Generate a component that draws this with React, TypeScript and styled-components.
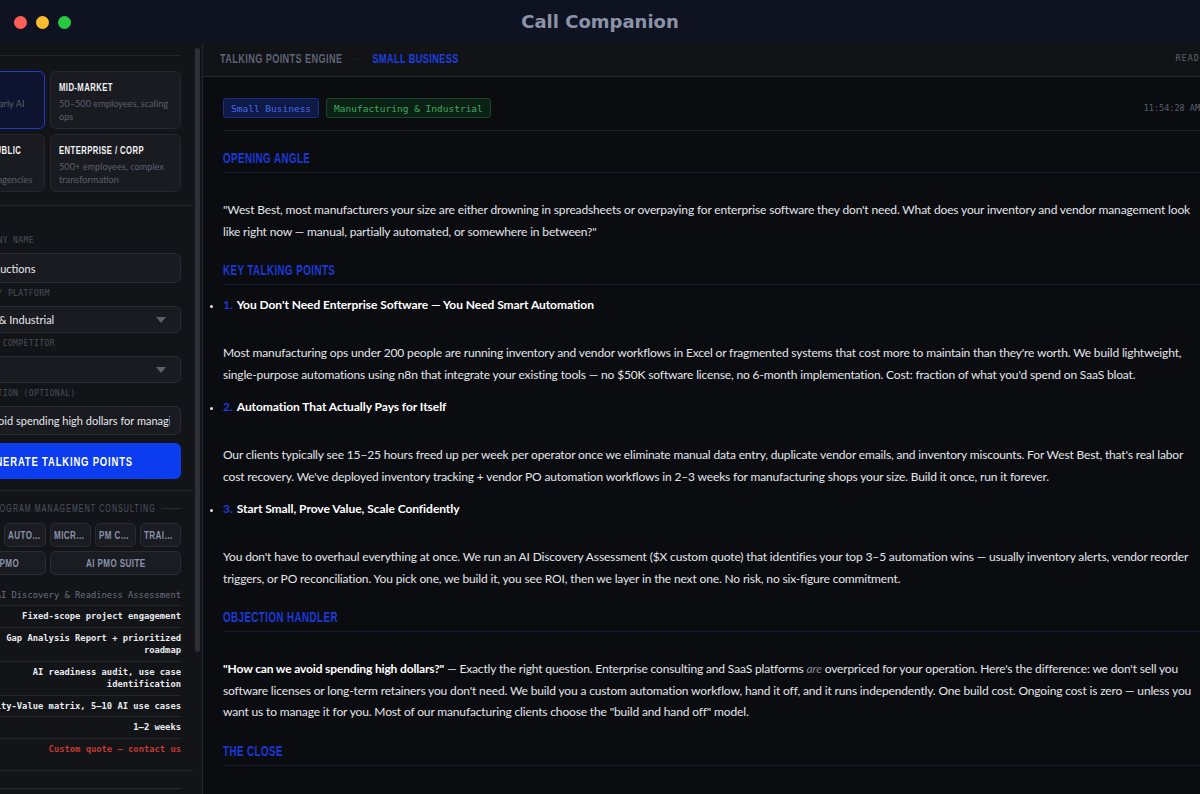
import React from "react";
import styled, { createGlobalStyle, css } from "styled-components";

const mono = `"DejaVu Sans Mono", "Liberation Mono", monospace`;
const sans = `Lato, "Noto Sans", sans-serif`;

/* narrow display caps: Liberation Sans Bold squeezed horizontally */
const SQUEEZE = 0.7;
const display = css`
  font-family: "Liberation Sans", Arial, sans-serif;
  font-weight: 700;
  white-space: nowrap;
`;
const squeeze = css`
  display: block;
  flex-shrink: 0;
  width: calc(100% / ${SQUEEZE});
  transform: scaleX(${SQUEEZE});
  transform-origin: left center;
`;

const GlobalStyle = createGlobalStyle`
  html, body {
    margin: 0;
    padding: 0;
    background: #0b0c10;
    overflow: hidden;
  }
  * {
    box-sizing: border-box;
  }
`;

const Window = styled.div`
  width: 1200px;
  height: 794px;
  display: flex;
  flex-direction: column;
  overflow: hidden;
  background: #0b0c10;
  font-family: ${sans};
`;

const TitleBar = styled.div`
  height: 43px;
  flex-shrink: 0;
  display: grid;
  grid-template-columns: 1fr auto 1fr;
  align-items: center;
  padding: 0 14px;
  background: #0f1321;
`;

const Lights = styled.div`
  display: flex;
  gap: 9px;
  margin-top: 1px;
`;

const Light = styled.span<{ $color: string }>`
  width: 13px;
  height: 13px;
  border-radius: 50%;
  background: ${(p) => p.$color};
`;

const AppTitle = styled.div`
  font-family: "DejaVu Sans", sans-serif;
  font-weight: 700;
  font-size: 18px;
  color: #8b93a9;
`;

const Body = styled.div`
  flex: 1;
  min-height: 0;
  display: flex;
  overflow: hidden;
`;

/* sidebar is wider than the part of the window in view */
const SideClip = styled.div`
  width: 203px;
  flex-shrink: 0;
  display: flex;
  justify-content: flex-end;
  overflow: hidden;
  background: #131418;
  border-right: 1px solid #23252b;
`;

const Sidebar = styled.aside`
  width: 295px;
  flex-shrink: 0;
  padding: 0 2px;
`;

const ScrollTrack = styled.div`
  width: 7px;
  flex-shrink: 0;
  padding-top: 5px;
`;

const ScrollThumb = styled.div`
  width: 5px;
  height: 604px;
  border-radius: 3px;
  background: #2d3037;
`;

const SideSection = styled.section<{ $pad: string; $last?: boolean }>`
  padding: ${(p) => p.$pad};
  border-bottom: ${(p) => (p.$last ? "none" : "1px solid #24262c")};
`;

const TopRule = styled.div`
  height: 13px;
  border-bottom: 1px solid #22242a;
`;

const CardGrid = styled.div`
  display: grid;
  grid-template-columns: minmax(0, 1fr) minmax(0, 1fr);
  gap: 5px;
  margin-top: 15px;
`;

const SegmentCard = styled.div<{ $active?: boolean }>`
  height: 58px;
  padding: 8px;
  overflow: hidden;
  border-radius: 6px;
  background: ${(p) => (p.$active ? "#0e1330" : "#1a1b20")};
  border: 1px solid ${(p) => (p.$active ? "#1e3ccf" : "#26282e")};
`;

const CardTitle = styled.div`
  ${display};
  ${squeeze};
  font-size: 11px;
  line-height: 14px;
  letter-spacing: 0.6px;
  color: #f2f3f6;
`;

const CardSub = styled.div`
  margin-top: 3px;
  font-size: 9.2px;
  line-height: 13px;
  color: #5a5f6b;
`;

const FieldLabel = styled.div`
  font-family: ${mono};
  font-size: 8px;
  line-height: 10px;
  letter-spacing: 0.4px;
  color: #4a4f5a;
  margin-bottom: 7px;
  white-space: nowrap;
`;

const Field = styled.div<{ $h: number }>`
  height: ${(p) => p.$h}px;
  margin-bottom: 6px;
  display: flex;
  align-items: center;
  gap: 8px;
  padding: 0 10px;
  border-radius: 6px;
  background: #1a1b20;
  border: 1px solid #2a2c33;
  font-size: 11px;
  color: #e6e8ec;
  white-space: nowrap;
`;

const FieldText = styled.span`
  flex: 1;
  overflow: hidden;
`;

const Caret = styled.span`
  width: 0;
  height: 0;
  border-left: 5px solid transparent;
  border-right: 5px solid transparent;
  border-top: 6px solid #5c616d;
  margin-right: 4px;
`;

const GenerateButton = styled.button`
  width: 100%;
  height: 36px;
  margin-top: 2px;
  padding: 0 0 0 18px;
  border: none;
  border-radius: 6px;
  background: #0b3cf0;
  color: #ffffff;
  overflow: hidden;
  span {
    ${display};
    ${squeeze};
    font-size: 13.5px;
    letter-spacing: 1.2px;
    text-align: center;
  }
`;

const GroupLabel = styled.div`
  ${display};
  ${squeeze};
  display: flex;
  align-items: center;
  gap: 8px;
  height: 10px;
  font-weight: 400;
  font-size: 10px;
  letter-spacing: 1.6px;
  color: #4e5464;
  &::after {
    content: "";
    flex: 1;
    height: 1px;
    background: #2a2c33;
  }
`;

const ChipRow = styled.div<{ $cols: number; $top: number }>`
  display: grid;
  grid-template-columns: repeat(${(p) => p.$cols}, minmax(0, 1fr));
  gap: 4px;
  margin-top: ${(p) => p.$top}px;
`;

const Chip = styled.div<{ $active?: boolean }>`
  height: 24px;
  padding: 0 3px;
  display: flex;
  align-items: center;
  border-radius: 5px;
  background: ${(p) => (p.$active ? "#0e1330" : "#1b1c21")};
  border: 1px solid ${(p) => (p.$active ? "#1e3ccf" : "#2a2c33")};
  overflow: hidden;
  span {
    ${display};
    ${squeeze};
    font-size: 11.5px;
    letter-spacing: 0.6px;
    text-align: center;
    color: #8a93ab;
    overflow: hidden;
    text-overflow: ellipsis;
  }
`;

const ServiceName = styled.div`
  margin-top: 14px;
  font-family: ${mono};
  font-size: 8.8px;
  line-height: 12px;
  color: #6b7080;
  text-align: right;
  white-space: nowrap;
`;

const SpecTable = styled.div`
  margin-top: 4px;
`;

const SpecRow = styled.div`
  display: flex;
  justify-content: space-between;
  gap: 16px;
  padding: 4px 0;
  border-top: 1px solid #24262c;
  font-family: ${mono};
  font-size: 8.8px;
  line-height: 12.5px;
`;

const SpecKey = styled.span`
  flex-shrink: 0;
  color: #5a5f6b;
`;

const SpecValue = styled.span<{ $accent?: boolean }>`
  text-align: right;
  font-weight: 700;
  color: ${(p) => (p.$accent ? "#c23a2e" : "#e8eaee")};
`;

const Main = styled.main`
  flex: 0 0 1017px;
  display: flex;
  flex-direction: column;
  background: #0b0c10;
`;

const MainHeader = styled.header`
  height: 34px;
  flex-shrink: 0;
  display: flex;
  align-items: center;
  padding: 0 14px 3px 17px;
  background: #121317;
  border-bottom: 1px solid #25272c;
`;

const HeaderTrail = styled.div`
  flex: 1;
  min-width: 0;
`;

const Crumbs = styled.div`
  ${squeeze};
  display: flex;
  align-items: center;
  gap: 20px;
`;

const HeaderCrumb = styled.span<{ $accent?: boolean }>`
  ${display};
  font-size: 13px;
  letter-spacing: 0.6px;
  color: ${(p) => (p.$accent ? "#1d40e0" : "#5e6475")};
`;

const CrumbDot = styled.span`
  color: #2c2f38;
  font-size: 12px;
`;

const Status = styled.span`
  font-family: ${mono};
  font-size: 8.5px;
  letter-spacing: 1px;
  color: #5c6272;
`;

const Content = styled.div`
  flex: 1;
  padding: 21px 20px 0;
  overflow: hidden;
`;

const TagRow = styled.div`
  display: flex;
  align-items: center;
  gap: 7px;
  padding-bottom: 12px;
  border-bottom: 1px solid #1f2126;
`;

const Tag = styled.span<{ $tone: "blue" | "green" }>`
  height: 20px;
  display: inline-flex;
  align-items: center;
  padding: 0 7px;
  border-radius: 3px;
  font-family: ${mono};
  font-size: 9.5px;
  background: ${(p) => (p.$tone === "blue" ? "#0e1a46" : "#0c2116")};
  border: 1px solid ${(p) => (p.$tone === "blue" ? "#1a2e82" : "#1c462a")};
  color: ${(p) => (p.$tone === "blue" ? "#4a68e8" : "#3daa5a")};
`;

const Timestamp = styled.span`
  margin-left: auto;
  font-family: ${mono};
  font-size: 8.5px;
  color: #5a6070;
`;

const SectionTitle = styled.h2`
  margin: 19px 0 0;
  padding-bottom: 5px;
  border-bottom: 1px solid #141a2c;
  font-size: 14px;
  line-height: 18px;
  ${TagRow} + & {
    margin-top: 18px;
  }
  span {
    ${display};
    ${squeeze};
    letter-spacing: 0.6px;
    color: #1a3ad8;
  }
`;

const Para = styled.p`
  margin: 26px 0 0;
  font-size: 12px;
  letter-spacing: -0.15px;
  line-height: 21.5px;
  color: #e3e5ea;
  strong {
    color: #ffffff;
  }
  em {
    color: #858a96;
  }
`;

const PointList = styled.ul`
  margin: 0 0 4px;
  padding: 0;
  list-style: disc outside;
  color: #e3e5ea;
`;

const Point = styled.li`
  margin-top: 11px;
  &:first-child {
    margin-top: 9px;
  }
  &::marker {
    font-size: 10px;
  }
`;

const PointTitle = styled.div`
  font-size: 12px;
  letter-spacing: -0.05px;
  line-height: 22px;
  font-weight: 700;
  color: #ffffff;
`;

const PointNum = styled.span`
  color: #1a3ad8;
  margin-right: 4px;
`;

const segments = [
  { title: "SMALL BUSINESS", sub: "1–50 employees, early AI", active: true },
  { title: "MID-MARKET", sub: "50–500 employees, scaling ops" },
  { title: "GOVERNMENT / PUBLIC", sub: "State, county, city municipalities and agencies" },
  { title: "ENTERPRISE / CORP", sub: "500+ employees, complex transformation" },
];

const services = ["AI DISCOVERY", "AGENT BUILD", "AUTOMATION", "MICROSOFT 365", "PM COACHING", "TRAINING"];
const suites = ["FRACTIONAL PMO", "AI PMO SUITE"];

const specs: [string, string][] = [
  ["Format", "Fixed-scope project engagement"],
  ["Deliverable", "Gap Analysis Report + prioritized roadmap"],
  ["Includes", "AI readiness audit, use case identification"],
  ["Output", "Priority-Value matrix, 5–10 AI use cases"],
  ["Timeline", "1–2 weeks"],
  ["Investment", "Custom quote — contact us"],
];

const points = [
  {
    title: "You Don't Need Enterprise Software — You Need Smart Automation",
    body: "Most manufacturing ops under 200 people are running inventory and vendor workflows in Excel or fragmented systems that cost more to maintain than they're worth. We build lightweight, single-purpose automations using n8n that integrate your existing tools — no $50K software license, no 6-month implementation. Cost: fraction of what you'd spend on SaaS bloat.",
  },
  {
    title: "Automation That Actually Pays for Itself",
    body: "Our clients typically see 15–25 hours freed up per week per operator once we eliminate manual data entry, duplicate vendor emails, and inventory miscounts. For West Best, that's real labor cost recovery. We've deployed inventory tracking + vendor PO automation workflows in 2–3 weeks for manufacturing shops your size. Build it once, run it forever.",
  },
  {
    title: "Start Small, Prove Value, Scale Confidently",
    body: "You don't have to overhaul everything at once. We run an AI Discovery Assessment ($X custom quote) that identifies your top 3–5 automation wins — usually inventory alerts, vendor reorder triggers, or PO reconciliation. You pick one, we build it, you see ROI, then we layer in the next one. No risk, no six-figure commitment.",
  },
];

function App() {
  return (
    <>
      <GlobalStyle />
      <Window>
        <TitleBar>
          <Lights>
            <Light $color="#ff5f57" />
            <Light $color="#febc2e" />
            <Light $color="#28c840" />
          </Lights>
          <AppTitle>Call Companion</AppTitle>
          <span />
        </TitleBar>

        <Body>
          <SideClip>
            <Sidebar>
              <SideSection $pad="0 12px 13px">
                <TopRule />
                <CardGrid>
                  {segments.map((s) => (
                    <SegmentCard key={s.title} $active={s.active}>
                      <CardTitle>{s.title}</CardTitle>
                      <CardSub>{s.sub}</CardSub>
                    </SegmentCard>
                  ))}
                </CardGrid>
              </SideSection>

              <SideSection $pad="30px 12px 11px">
                <FieldLabel>PROSPECT / COMPANY NAME</FieldLabel>
                <Field $h={30}>
                  <FieldText>West Best Productions</FieldText>
                </Field>
                <FieldLabel>TARGET INDUSTRY / PLATFORM</FieldLabel>
                <Field $h={27}>
                  <FieldText>Manufacturing &amp; Industrial</FieldText>
                  <Caret />
                </Field>
                <FieldLabel>CURRENT VENDOR / COMPETITOR</FieldLabel>
                <Field $h={27}>
                  <FieldText />
                  <Caret />
                </Field>
                <FieldLabel>OBJECTION / QUESTION (OPTIONAL)</FieldLabel>
                <Field $h={29}>
                  <FieldText>How can we avoid spending high dollars for managing it</FieldText>
                </Field>
                <GenerateButton>
                  <span>GENERATE TALKING POINTS</span>
                </GenerateButton>
              </SideSection>

              <SideSection $pad="12px 12px 11px">
                <GroupLabel>AI SOLUTIONS + PROGRAM MANAGEMENT CONSULTING</GroupLabel>
                <ChipRow $cols={6} $top={10}>
                  {services.map((s, i) => (
                    <Chip key={s} $active={i === 0}>
                      <span>{s}</span>
                    </Chip>
                  ))}
                </ChipRow>
                <ChipRow $cols={2} $top={4}>
                  {suites.map((s) => (
                    <Chip key={s}>
                      <span>{s}</span>
                    </Chip>
                  ))}
                </ChipRow>
                <ServiceName>AI Discovery &amp; Readiness Assessment</ServiceName>
                <SpecTable>
                  {specs.map(([k, v], i) => (
                    <SpecRow key={k}>
                      <SpecKey>{k}</SpecKey>
                      <SpecValue $accent={i === specs.length - 1}>{v}</SpecValue>
                    </SpecRow>
                  ))}
                </SpecTable>
              </SideSection>

              <SideSection $pad="12px 12px 11px" $last>
                <GroupLabel>NOTES</GroupLabel>
              </SideSection>
            </Sidebar>
            <ScrollTrack>
              <ScrollThumb />
            </ScrollTrack>
          </SideClip>

          <Main>
            <MainHeader>
              <HeaderTrail>
                <Crumbs>
                  <HeaderCrumb>TALKING POINTS ENGINE</HeaderCrumb>
                  <CrumbDot>·</CrumbDot>
                  <HeaderCrumb $accent>SMALL BUSINESS</HeaderCrumb>
                </Crumbs>
              </HeaderTrail>
              <Status>READY</Status>
            </MainHeader>

            <Content>
              <TagRow>
                <Tag $tone="blue">Small Business</Tag>
                <Tag $tone="green">Manufacturing &amp; Industrial</Tag>
                <Timestamp>11:54:28 AM</Timestamp>
              </TagRow>

              <SectionTitle>
                <span>OPENING ANGLE</span>
              </SectionTitle>
              <Para>
                "West Best, most manufacturers your size are either drowning in spreadsheets or overpaying for
                enterprise software they don't need. What does your inventory and vendor management look like right
                now — manual, partially automated, or somewhere in between?"
              </Para>

              <SectionTitle>
                <span>KEY TALKING POINTS</span>
              </SectionTitle>
              <PointList>
                {points.map((p, i) => (
                  <Point key={p.title}>
                    <PointTitle>
                      <PointNum>{i + 1}.</PointNum>
                      {p.title}
                    </PointTitle>
                    <Para>{p.body}</Para>
                  </Point>
                ))}
              </PointList>

              <SectionTitle>
                <span>OBJECTION HANDLER</span>
              </SectionTitle>
              <Para>
                <strong>"How can we avoid spending high dollars?"</strong> — Exactly the right question. Enterprise
                consulting and SaaS platforms <em>are</em> overpriced for your operation. Here's the difference: we
                don't sell you software licenses or long-term retainers you don't need. We build you a custom
                automation workflow, hand it off, and it runs independently. One build cost. Ongoing cost is zero —
                unless you want us to manage it for you. Most of our manufacturing clients choose the "build and hand
                off" model.
              </Para>

              <SectionTitle>
                <span>THE CLOSE</span>
              </SectionTitle>
            </Content>
          </Main>
        </Body>
      </Window>
    </>
  );
}

export default App;
